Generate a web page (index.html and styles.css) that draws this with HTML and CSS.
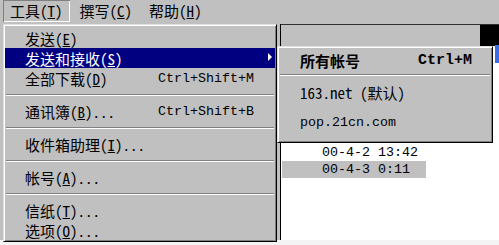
FILE: index.html
```html
<!DOCTYPE html>
<html lang="zh-CN">
<head>
<meta charset="utf-8">
<title>工具菜单</title>
<link rel="stylesheet" href="styles.css">
</head>
<body>
<div class="app">
  <div class="menubar">
    <span class="mb-item pressed">工具(<u>T</u>)</span>
    <span class="mb-item">撰写(<u>C</u>)</span>
    <span class="mb-item">帮助(<u>H</u>)</span>
  </div>
  <div class="window">
    <div class="left-pane"></div>
    <div class="right-pane">
      <div class="toolbar">
        <div class="tb-fill"></div>
        <div class="tb-dark"><span class="tb-blue"></span></div>
      </div>
      <div class="list">
        <div class="list-row"><span class="cell">00-4-2 13:42</span></div>
        <div class="list-row sel"><span class="cell">00-4-3 0:11</span></div>
      </div>
    </div>
  </div>
  <div class="footer"></div>

  <div class="menu main-menu">
    <div class="mi"><span>发送(<u>E</u>)</span></div>
    <div class="mi active"><span>发送和接收(<u>S</u>)</span><span></span><span class="arrow"></span></div>
    <div class="mi"><span>全部下载(<u>D</u>)</span><span class="key">Ctrl+Shift+M</span></div>
    <div class="sep"></div>
    <div class="mi"><span>通讯簿(<u>B</u>)...</span><span class="key">Ctrl+Shift+B</span></div>
    <div class="sep"></div>
    <div class="mi"><span>收件箱助理(<u>I</u>)...</span></div>
    <div class="sep"></div>
    <div class="mi"><span>帐号(<u>A</u>)...</span></div>
    <div class="sep"></div>
    <div class="mi"><span>信纸(<u>T</u>)...</span></div>
    <div class="mi"><span>选项(<u>O</u>)...</span></div>
  </div>

  <div class="menu sub-menu">
    <div class="si first bold"><span>所有帐号</span><span class="key-bold">Ctrl+M</span></div>
    <div class="sub-sep"></div>
    <div class="si"><span>163.net (默认)</span></div>
    <div class="si"><span class="latin">pop.21cn.com</span></div>
  </div>
</div>
</body>
</html>
```

FILE: styles.css
```css
* { box-sizing: border-box; }

html, body {
  margin: 0;
  padding: 0;
}

body {
  width: 499px;
  height: 245px;
  overflow: hidden;
  background: #c0c0c0;
  color: #000;
  font-family: "Noto Sans Mono CJK SC", "Liberation Mono", "Noto Sans CJK SC", monospace;
  font-size: 15px;
}

.app {
  position: relative;
  width: 499px;
  height: 245px;
}

u { text-decoration: underline; text-underline-offset: 1px; }

.key, .latin {
  font-family: "Liberation Mono", monospace;
  font-size: 13.33px;
}

.key-bold {
  font-family: "Liberation Mono", monospace;
  font-size: 15px;
  font-weight: bold;
}

/* menubar */
.menubar {
  height: 24px;
  display: flex;
  gap: 3px;
  padding-left: 3px;
}

.mb-item {
  height: 22px;
  line-height: 22px;
  padding: 0 7px;
  white-space: nowrap;
}

.mb-item.pressed {
  box-shadow: inset 1px 1px #808080, inset -1px -1px #fff;
}

/* background window */
.window {
  display: grid;
  grid-template-columns: 280px 1fr;
  height: 216px;
}

.left-pane { background: #c0c0c0; }

.right-pane {
  display: flex;
  flex-direction: column;
  border-left: 1px solid #000;
}

.toolbar {
  height: 22px;
  display: flex;
  border-top: 1px solid #303030;
}

.tb-fill { flex: 1; background: #c0c0c0; }

.tb-dark {
  width: 19px;
  background: #000;
  position: relative;
}

.tb-blue {
  position: absolute;
  right: 0;
  top: 20px;
  width: 4px;
  height: 18px;
  background: #3a6ee8;
}

.list {
  flex: 1;
  background: #fff;
  padding-top: 98px;
  padding-left: 1px;
  font-family: "Liberation Mono", monospace;
  font-size: 13.33px;
}

.list-row {
  height: 17px;
  line-height: 17px;
}

.cell {
  display: block;
  width: 144px;
  padding-left: 40px;
  white-space: nowrap;
}

.list-row.sel .cell { background: #c0c0c0; }

.footer {
  height: 5px;
  background: #f4f4f4;
}

/* menus */
.menu {
  position: absolute;
  background: #c0c0c0;
  border: 1px solid;
  border-color: #dfdfdf #000 #000 #dfdfdf;
  box-shadow: inset 1px 1px #fff, inset -1px -1px #808080;
}

.main-menu {
  left: 3px;
  top: 24px;
  width: 274px;
  height: 218px;
  padding: 3px 1px 1px 1px;
}

.mi {
  height: 20px;
  display: grid;
  grid-template-columns: 133px 1fr auto;
  align-items: center;
  padding-left: 20px;
  padding-right: 3px;
  white-space: nowrap;
}

.mi.active {
  background: #000080;
  color: #fff;
}

.arrow {
  width: 0;
  height: 0;
  border-left: 4px solid #fff;
  border-top: 4px solid transparent;
  border-bottom: 4px solid transparent;
  margin-top: -3px;
}

.sep {
  height: 13px;
  padding-top: 6px;
}

.sep::before {
  content: "";
  display: block;
  margin: 0 1px;
  border-top: 1px solid #808080;
  border-bottom: 1px solid #fff;
}

.sub-menu {
  left: 277px;
  top: 46px;
  width: 216px;
  height: 97px;
  padding: 1px 1px 5px 1px;
}

.si {
  height: 30px;
  display: grid;
  grid-template-columns: 118px 1fr;
  align-items: center;
  padding-left: 21px;
  white-space: nowrap;
}

.si.first { height: 24px; }

.si.bold { font-weight: bold; }

.sub-sep {
  height: 5px;
  padding-top: 2px;
}

.sub-sep::before {
  content: "";
  display: block;
  margin: 0 1px;
  border-top: 1px solid #808080;
  border-bottom: 1px solid #fff;
}
```
